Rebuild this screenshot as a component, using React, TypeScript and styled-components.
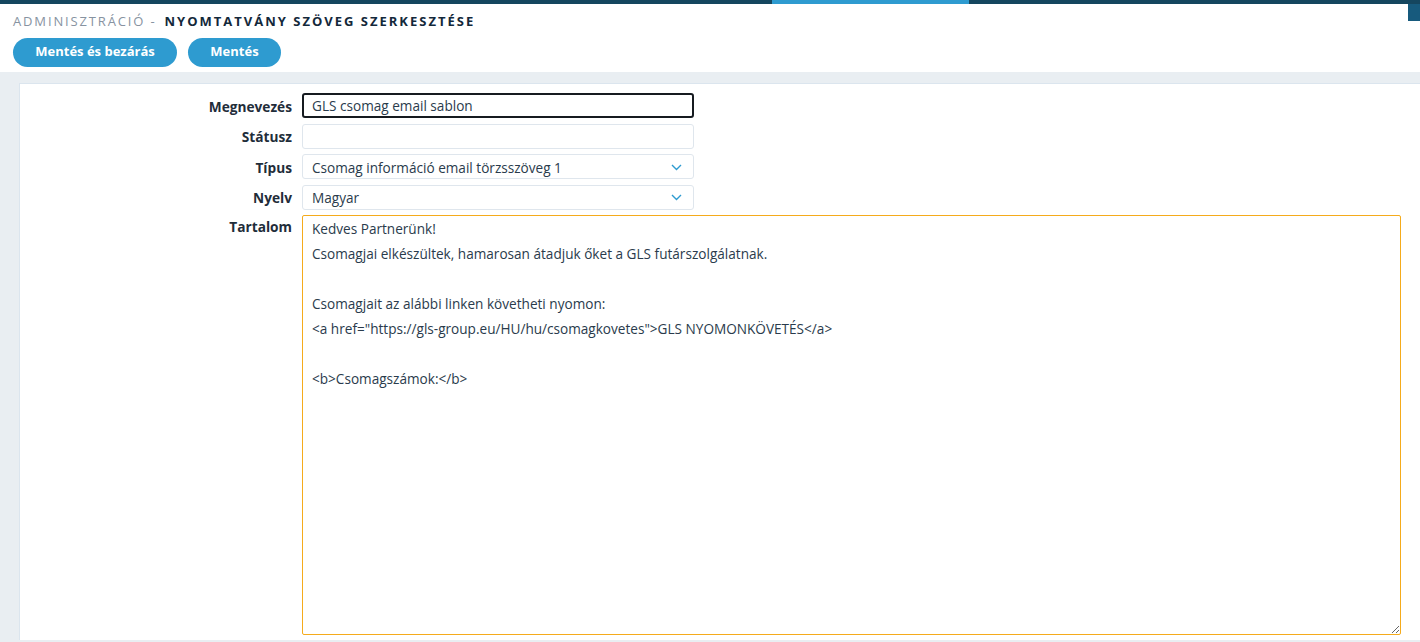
import React from "react";
import styled, { createGlobalStyle } from "styled-components";

const Global = createGlobalStyle`
  html, body { margin: 0; padding: 0; background: #ffffff; }
  body { font-family: "Open Sans", "Liberation Sans", sans-serif; color: #22303d; }
  * { box-sizing: border-box; }
`;

const Page = styled.div`
  width: 1420px;
  height: 642px;
  display: flex;
  flex-direction: column;
  position: relative;
  overflow: hidden;
`;

const TopBar = styled.div`
  height: 4px;
  background: #15465f;
  display: flex;
  flex-shrink: 0;
`;

const TopBarActive = styled.div`
  margin-left: 772px;
  width: 197px;
  background: #2e9bd0;
`;

const CornerTab = styled.div`
  position: absolute;
  top: 4px;
  right: 0;
  width: 12px;
  height: 17px;
  background: #175a7d;
`;

const Header = styled.header`
  height: 68px;
  padding: 0 13px;
  display: flex;
  flex-direction: column;
  flex-shrink: 0;
`;

const Title = styled.h1`
  margin: 0;
  height: 34px;
  display: flex;
  align-items: center;
  font-size: 13px;
  font-weight: 400;
  white-space: nowrap;
`;

const TitleMuted = styled.span`
  color: #8793a1;
  letter-spacing: 1.85px;
  margin-right: 8px;
`;

const TitleStrong = styled.span`
  color: #13283a;
  font-weight: 700;
  letter-spacing: 2px;
`;

const Actions = styled.div`
  display: flex;
  gap: 11px;
`;

const PillButton = styled.button<{ $w: number }>`
  width: ${(p) => p.$w}px;
  height: 29px;
  border: none;
  border-radius: 15px;
  background: #2e9bd0;
  color: #ffffff;
  font-family: "Open Sans", "Liberation Sans", sans-serif;
  font-size: 13px;
  font-weight: 700;
  line-height: 27px;
  padding: 0 0 2px;
  cursor: pointer;
`;

const Main = styled.main`
  flex: 1;
  background: #e9eef2;
  padding: 11px 0 2px 19px;
  display: flex;
`;

const Panel = styled.section`
  flex: 1;
  background: #ffffff;
  border-left: 1px solid #dbe5ee;
  border-top: 1px solid #dbe5ee;
  padding: 9px 0 0 0;
`;

const Form = styled.div`
  display: grid;
  grid-template-columns: 272px 1099px;
  column-gap: 10px;
  row-gap: 5.5px;
`;

const Label = styled.label<{ $top?: boolean }>`
  font-size: 13.7px;
  font-weight: 700;
  color: #1f2d3a;
  text-align: right;
  align-self: ${(p) => (p.$top ? "start" : "center")};
  padding-top: ${(p) => (p.$top ? "1px" : "2px")};
  line-height: 22px;
`;

const FieldBox = styled.div`
  width: 392px;
  height: 25px;
  position: relative;
`;

const TextInput = styled.input<{ $focused?: boolean }>`
  width: 100%;
  height: 100%;
  border: ${(p) => (p.$focused ? "2px solid #161b20" : "1px solid #dfe6ed")};
  border-radius: 3px;
  padding: 0 ${(p) => (p.$focused ? "8px" : "9px")};
  font-family: "Open Sans", "Liberation Sans", sans-serif;
  font-size: 13.6px;
  color: #2a3b4c;
  background: #ffffff;
  outline: none;
`;

const SelectBox = styled.div`
  width: 100%;
  height: 100%;
  border: 1px solid #dfe6ed;
  border-radius: 3px;
  padding: 1px 9px 0;
  display: flex;
  align-items: center;
  justify-content: space-between;
  font-size: 13.6px;
  color: #2a3b4c;
`;

const Chevron = styled.svg`
  width: 11px;
  height: 7px;
  margin-right: 2px;
`;

const TextArea = styled.textarea`
  width: 1099px;
  height: 420px;
  border: 1px solid #f5ab1c;
  border-radius: 2px;
  padding: 0 9px;
  font-family: "Open Sans", "Liberation Sans", sans-serif;
  font-size: 13.6px;
  line-height: 25px;
  color: #2a3b4c;
  outline: none;
  resize: both;
`;

const Select = ({ value }: { value: string }) => (
  <FieldBox>
    <SelectBox>
      <span>{value}</span>
      <Chevron viewBox="0 0 11 7">
        <path d="M1 1 L5.5 5.5 L10 1" fill="none" stroke="#2e9bd0" strokeWidth="1.4" />
      </Chevron>
    </SelectBox>
  </FieldBox>
);

const content = `Kedves Partnerünk!
Csomagjai elkészültek, hamarosan átadjuk őket a GLS futárszolgálatnak.

Csomagjait az alábbi linken követheti nyomon:
<a href="https://gls-group.eu/HU/hu/csomagkovetes">GLS NYOMONKÖVETÉS</a>

<b>Csomagszámok:</b>`;

export default function App() {
  return (
    <>
      <Global />
      <Page>
        <TopBar>
          <TopBarActive />
        </TopBar>
        <CornerTab />
        <Header>
          <Title>
            <TitleMuted>ADMINISZTRÁCIÓ -</TitleMuted>
            <TitleStrong>NYOMTATVÁNY SZÖVEG SZERKESZTÉSE</TitleStrong>
          </Title>
          <Actions>
            <PillButton $w={164}>Mentés és bezárás</PillButton>
            <PillButton $w={93}>Mentés</PillButton>
          </Actions>
        </Header>
        <Main>
          <Panel>
            <Form>
              <Label>Megnevezés</Label>
              <FieldBox>
                <TextInput $focused defaultValue="GLS csomag email sablon" />
              </FieldBox>
              <Label>Státusz</Label>
              <FieldBox>
                <TextInput defaultValue="" />
              </FieldBox>
              <Label>Típus</Label>
              <Select value="Csomag információ email törzsszöveg 1" />
              <Label>Nyelv</Label>
              <Select value="Magyar" />
              <Label $top>Tartalom</Label>
              <TextArea defaultValue={content} />
            </Form>
          </Panel>
        </Main>
      </Page>
    </>
  );
}
